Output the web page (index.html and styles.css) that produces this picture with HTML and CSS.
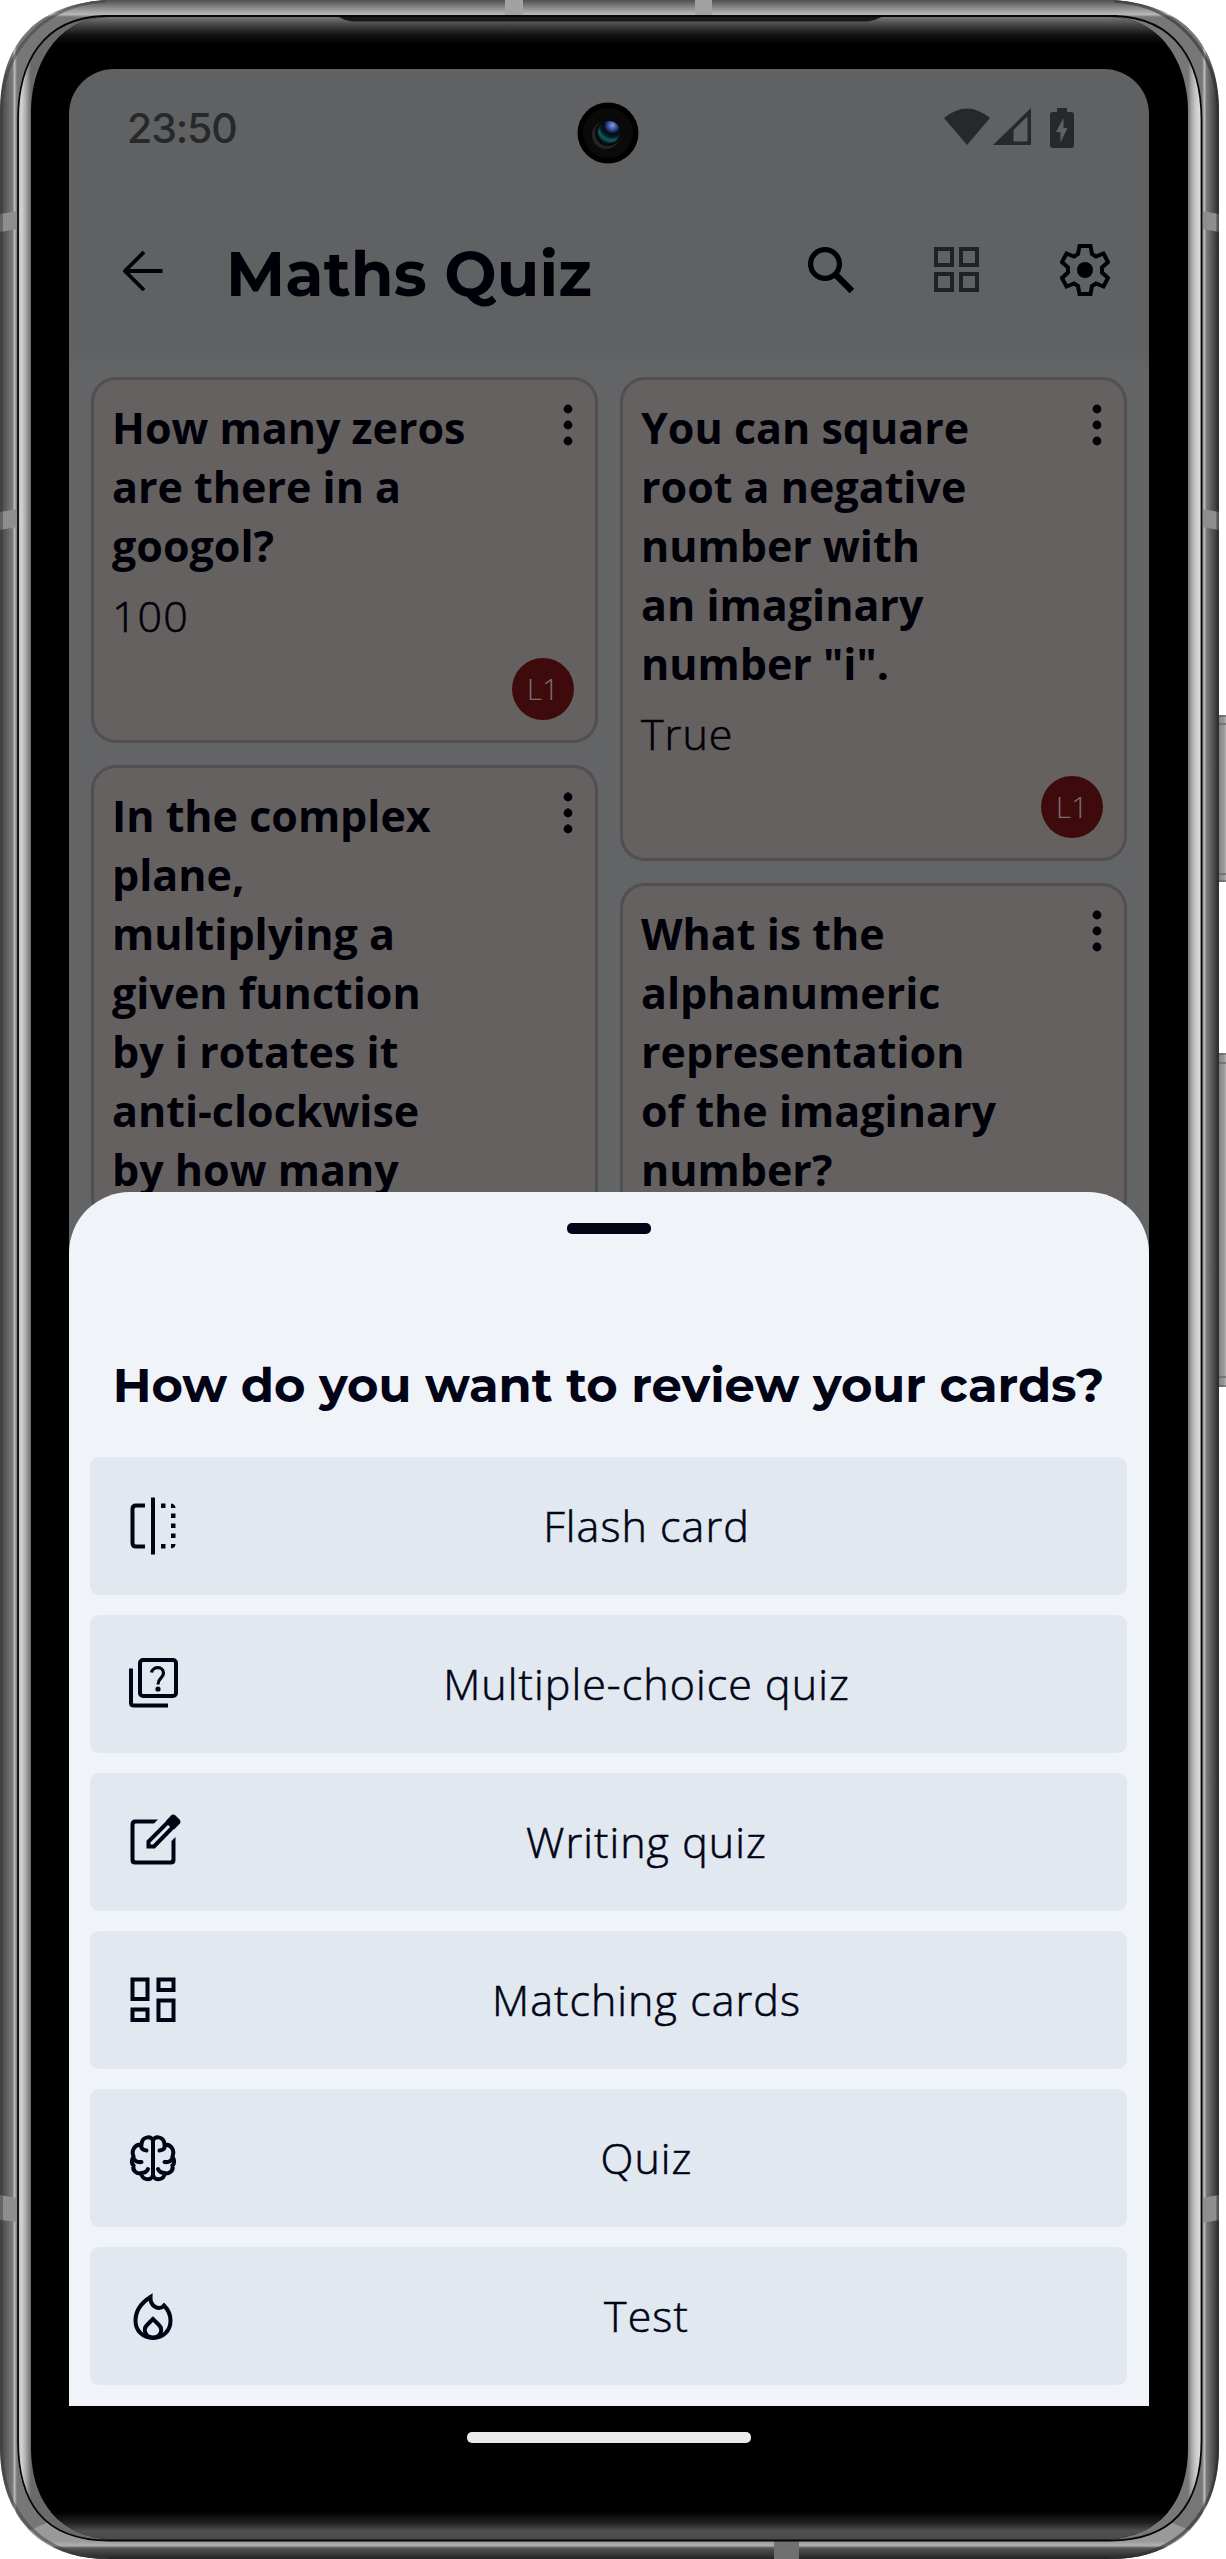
FILE: index.html
```html
<!DOCTYPE html>
<html lang="en">
<head>
<meta charset="utf-8">
<title>Maths Quiz</title>
<link rel="stylesheet" href="styles.css">
</head>
<body>
<div class="phone">
  <svg class="frame" width="1226" height="2559" viewBox="0 0 1226 2559" aria-hidden="true">
    <defs>
      <linearGradient id="metal-l" x1="0" x2="17" y1="0" y2="0" gradientUnits="userSpaceOnUse">
        <stop offset="0" stop-color="#424242"/><stop offset=".35" stop-color="#5c5c5c"/><stop offset=".75" stop-color="#7c7c7c"/><stop offset=".85" stop-color="#bcbcbc"/><stop offset="1" stop-color="#777"/>
      </linearGradient>
      <linearGradient id="metal-r" x1="1219" x2="1202" y1="0" y2="0" gradientUnits="userSpaceOnUse">
        <stop offset="0" stop-color="#2c2c2c"/><stop offset=".35" stop-color="#505050"/><stop offset=".75" stop-color="#7c7c7c"/><stop offset=".85" stop-color="#bcbcbc"/><stop offset="1" stop-color="#777"/>
      </linearGradient>
      <linearGradient id="metal-t" x1="0" x2="0" y1="0" y2="17" gradientUnits="userSpaceOnUse">
        <stop offset="0" stop-color="#505050"/><stop offset=".5" stop-color="#8e8e8e"/><stop offset=".85" stop-color="#b8b8b8"/><stop offset="1" stop-color="#777"/>
      </linearGradient>
      <linearGradient id="metal-b" x1="0" x2="0" y1="2541" y2="2559" gradientUnits="userSpaceOnUse">
        <stop offset="0" stop-color="#999"/><stop offset=".25" stop-color="#b0b0b0"/><stop offset=".4" stop-color="#555"/><stop offset="1" stop-color="#222"/>
      </linearGradient>
      <linearGradient id="strip-l" x1="17" x2="31" y1="0" y2="0" gradientUnits="userSpaceOnUse">
        <stop offset="0" stop-color="#aaa"/><stop offset=".3" stop-color="#d4d4d4"/><stop offset=".6" stop-color="#b0b0b0"/><stop offset="1" stop-color="#6a6a6a"/>
      </linearGradient>
      <linearGradient id="strip-r" x1="1201" x2="1188" y1="0" y2="0" gradientUnits="userSpaceOnUse">
        <stop offset="0" stop-color="#e0e0e0"/><stop offset=".4" stop-color="#cacaca"/><stop offset=".7" stop-color="#aaa"/><stop offset="1" stop-color="#777"/>
      </linearGradient>
      <linearGradient id="glow-t" x1="0" x2="0" y1="17" y2="44" gradientUnits="userSpaceOnUse">
        <stop offset="0" stop-color="#777"/><stop offset=".3" stop-color="#444"/><stop offset=".65" stop-color="#141414"/><stop offset="1" stop-color="#000"/>
      </linearGradient>
      <linearGradient id="glow-b" x1="0" x2="0" y1="2539" y2="2512" gradientUnits="userSpaceOnUse">
        <stop offset="0" stop-color="#4a4a4a"/><stop offset=".3" stop-color="#505050"/><stop offset=".6" stop-color="#202020"/><stop offset="1" stop-color="#000"/>
      </linearGradient>
      <linearGradient id="key" x1="1217" x2="1226" y1="0" y2="0" gradientUnits="userSpaceOnUse">
        <stop offset="0" stop-color="#444"/><stop offset=".3" stop-color="#8a8a8a"/><stop offset=".75" stop-color="#989898"/><stop offset="1" stop-color="#b4b4b4"/>
      </linearGradient>
      <clipPath id="body"><path d="M105 0H1114C1190 6 1219 50 1219 112V2447C1219 2510 1186 2559 1110 2559H109C33 2559 0 2510 0 2447V112C0 50 29 6 105 0Z"/></clipPath>
      <clipPath id="glass"><path d="M110 17H1109C1160 17 1188 62 1188 112V2447C1188 2500 1162 2539 1100 2540H119C57 2539 31 2500 31 2447V112C31 62 59 17 110 17Z"/></clipPath>
      <radialGradient id="lens" cx=".65" cy=".2" r=".9">
        <stop offset="0" stop-color="#8c98e8"/><stop offset=".22" stop-color="#34559c"/><stop offset=".42" stop-color="#050b16"/><stop offset=".58" stop-color="#04181c"/><stop offset=".75" stop-color="#0d5e60"/><stop offset="1" stop-color="#041414"/>
      </radialGradient>
    </defs>
    <g>
      <rect x="1217" y="715" width="12" height="167" fill="url(#key)"/><path d="M1218 716h8M1218 724h8M1218 874h8M1218 881h8" stroke="#555"/>
      <rect x="1217" y="1053" width="12" height="334" fill="url(#key)"/><path d="M1218 1054h8M1218 1063h8M1218 1377h8M1218 1386h8" stroke="#555"/>
    </g>
    <g clip-path="url(#body)">
      <rect width="610" height="2559" fill="url(#metal-l)"/>
      <rect x="609" width="610" height="2559" fill="url(#metal-r)"/>
      <path d="M28 28L60 0H1159L1191 28L1120 60H100Z" fill="url(#metal-t)"/>
      <path d="M28 2531L60 2559H1159L1191 2531L1120 2500H100Z" fill="url(#metal-b)"/>
      <g fill="#8e8e8e">
        <path fill="#a2a2a2" d="M505 0h18v21h-18zM695 0h17v21h-17z"/><path fill="#707070" d="M774 2541h25v18h-25z"/>
        <path d="M0 214l17-3v18l-17 3zM0 512l17-3v18l-17 3zM0 2195l17 3v24l-17-2z"/>
        <path d="M1219 214l-17-3v18l17 3zM1219 512l-17-3v18l17 3zM1219 2195l-17 3v25l17-3z"/>
      </g>
      <path d="M105 1C42 5 1.500 52 1.500 112V2447C1.500 2512 40 2557 109 2558" fill="none" stroke="#3c3c3c" stroke-opacity=".5" stroke-width="3"/>
      <path d="M1114 1C1177 5 1218 52 1218 112V2447C1218 2512 1179 2557 1110 2558" fill="none" stroke="#303030" stroke-opacity=".6" stroke-width="3"/>
    </g>
    <path d="M104 16H1115C1176 18 1202 62 1202 120V2440C1202 2502 1176 2541 1110 2541H109C43 2541 17 2502 17 2440V120C17 62 43 18 104 16Z" fill="url(#strip-l)"/>
    <path d="M1109 16H1115C1176 18 1202 62 1202 120V2440C1202 2502 1176 2541 1110 2541H1100Z" fill="url(#strip-r)"/>
    <g clip-path="url(#glass)">
      <rect x="31" y="17" width="1157" height="2523" fill="#000"/>
      <rect x="31" y="17" width="1157" height="27" fill="url(#glow-t)"/>
      <rect x="31" y="2512" width="1157" height="28" fill="url(#glow-b)"/>
      <path d="M330 16C342 16 342 21 354 21.500H866C878 21 878 16 890 16Z" fill="#181818"/>
    </g>
    <path d="M104 16H1115C1176 18 1201.500 62 1201.500 120V2440C1201.500 2502 1176 2540.500 1110 2540.500H109C43 2540.500 18 2502 18 2440V120C18 62 43 18 104 16Z" fill="none" stroke="#060606" stroke-width="1.800"/>
  </svg>

  <main class="screen">
    <div class="status">
      <span class="clock">23:50</span>
      <div class="signals">
        <svg width="46" height="38" viewBox="0 0 46 38"><path d="M0 10Q23-9 46 10L23 37Z"/></svg>
        <svg class="cell" width="38" height="38" viewBox="0 0 38 38"><path fill-rule="evenodd" d="M38 0V37H0ZM20.500 22V33.500H34.500V8.500Z"/></svg>
        <svg width="24" height="40" viewBox="0 0 24 40"><path fill-rule="evenodd" d="M7 0H17V4H21Q24 4 24 7V37Q24 40 21 40H3Q0 40 0 37V7Q0 4 3 4H7ZM13.500 10L6 24H10.500V34.500L17.500 20H13.500Z"/></svg>
      </div>
    </div>
    <svg class="camera" width="62" height="62" viewBox="0 0 62 62"><circle cx="31" cy="31" r="30.500" fill="#000"/><circle cx="31" cy="31" r="25" fill="#0a0a0a"/><circle cx="29" cy="33" r="14" fill="#242424"/><circle cx="31" cy="31" r="13" fill="#0a0a0c"/><circle cx="32" cy="30" r="11" fill="url(#lens)"/></svg>

    <header class="bar">
      <svg class="back" width="40" height="40" viewBox="0 0 40 40"><path d="M21 1L2 20L21 39M2 20H39.500" fill="none" stroke="#000008" stroke-width="3.800"/></svg>
      <h1>Maths Quiz</h1>
      <div class="tools">
        <svg width="46" height="46" viewBox="0 0 46 46"><circle cx="17" cy="17" r="14.400" fill="none" stroke="#000008" stroke-width="5.200"/><path d="M28 28L44 44" stroke="#000008" stroke-width="6.500"/></svg>
        <svg width="46" height="46" viewBox="0 0 46 46"><path d="M2 2H18V18H2ZM27 2H43V18H27ZM2 27H18V43H2ZM27 27H43V43H27Z" fill="none" stroke="#202123" stroke-width="4"/></svg>
        <svg width="50" height="52" viewBox="0 0 50 52"><path d="M19.500 2H30.500L32 10L36 12.500L43.500 9.500L48 18L42 23.500V28.500L48 34L43.500 42.500L36 39.500L32 42L30.500 50H19.500L18 42L14 39.500L6.500 42.500L2 34L8 28.500V23.500L2 18L6.500 9.500L14 12.500L18 10Z" fill="none" stroke="#000008" stroke-width="4"/><circle cx="25" cy="26" r="8" fill="#000008"/></svg>
      </div>
    </header>

    <section class="cards">
      <div class="column">
        <article class="card">
          <h2>How many zeros<br>are there in a<br>googol?</h2>
          <p>100</p>
          <span class="badge">L1</span>
          <svg class="more" width="10" height="42" viewBox="0 0 10 42"><circle cx="5" cy="5" r="4.400"/><circle cx="5" cy="21" r="4.400"/><circle cx="5" cy="37" r="4.400"/></svg>
        </article>
        <article class="card">
          <h2>In the complex<br>plane,<br>multiplying a<br>given function<br>by i rotates it<br>anti-clockwise<br>by how many</h2>
          <svg class="more" width="10" height="42" viewBox="0 0 10 42"><circle cx="5" cy="5" r="4.400"/><circle cx="5" cy="21" r="4.400"/><circle cx="5" cy="37" r="4.400"/></svg>
        </article>
      </div>
      <div class="column">
        <article class="card">
          <h2>You can square<br>root a negative<br>number with<br>an imaginary<br>number "i".</h2>
          <p>True</p>
          <span class="badge">L1</span>
          <svg class="more" width="10" height="42" viewBox="0 0 10 42"><circle cx="5" cy="5" r="4.400"/><circle cx="5" cy="21" r="4.400"/><circle cx="5" cy="37" r="4.400"/></svg>
        </article>
        <article class="card">
          <h2>What is the<br>alphanumeric<br>representation<br>of the imaginary<br>number?</h2>
          <svg class="more" width="10" height="42" viewBox="0 0 10 42"><circle cx="5" cy="5" r="4.400"/><circle cx="5" cy="21" r="4.400"/><circle cx="5" cy="37" r="4.400"/></svg>
        </article>
      </div>
    </section>

    <section class="sheet">
      <div class="handle"></div>
      <h2 class="ask">How do you want to review your cards?</h2>
      <div class="options">
        <button class="option">
          <svg width="60" height="60" viewBox="0 0 60 60"><path d="M22 9.500H13Q9.500 9.500 9.500 13V47Q9.500 50.500 13 50.500H22" fill="none" stroke-width="4"/><path d="M30 1.500V58.500" stroke-width="4"/><path class="solid" d="M38 7.500h4.500v4.500H38zM38 48h4.500v4.500H38zM48 17.500h4.500v4.500H48zM48 27.500h4.500v4.500H48zM48 37.500h4.500v4.500H48zM48 7.500Q52.500 8 52.500 12H48zM48 52.500Q52.500 52 52.500 48H48z"/></svg>
          <span>Flash card</span>
        </button>
        <button class="option">
          <svg width="60" height="60" viewBox="0 0 60 60"><rect x="17" y="6" width="36" height="36" rx="3" fill="none" stroke-width="4"/><path d="M8 14.500V49Q8 51.500 11 51.500H45" fill="none" stroke-width="4"/><path d="M28.500 18.500C30 11.500 40.500 12.500 40.500 19C40.500 24 35 24 35 30.500" fill="none" stroke-width="3.200"/><circle class="solid" cx="35" cy="35" r="2.600"/></svg>
          <span>Multiple-choice quiz</span>
        </button>
        <button class="option">
          <svg width="60" height="60" viewBox="0 0 60 60"><path class="solid" d="M7.500 13Q7.500 7.500 12 7.500H35L31 11.500H12.500L11.500 12.500V47.500L12.500 48.500H47.500L48.500 47.500V29L52.500 25V48Q52.500 52.500 48 52.500H12Q7.500 52.500 7.500 48Z"/><path d="M25.500 29.500V34.500H31L50 15L45 10Z" fill="none" stroke-width="4"/><path class="solid" d="M43 9L48 3.500Q50 1.500 52.500 3.500L56.500 7.500Q58.500 10 56.500 12L51 17.500Z"/></svg>
          <span>Writing quiz</span>
        </button>
        <button class="option">
          <svg width="60" height="60" viewBox="0 0 60 60"><path d="M9.500 9.500H24.500V29H9.500ZM35.500 9.500H50.500V20H35.500ZM9.500 39.500H24.500V50H9.500ZM35.500 30.500H50.500V50H35.500Z" fill="none" stroke-width="4"/></svg>
          <span>Matching cards</span>
        </button>
        <button class="option">
          <svg width="60" height="60" viewBox="0 0 60 60"><path d="M30 13.500C30 7.500 19 7.500 18.500 16.500C12 16 8 22 10.500 28.500C8 33 9 36 10.500 37.500C9 43 14 46 18.500 45.500C18 52 29 53.500 30 47M18 18C18.500 21 20.500 22.300 23.500 22.500M10.500 30C12 33.500 15 34.500 18.500 34M18 45C21 45 24 43.500 25 41M30 13.500C30 7.500 41 7.500 41.500 16.500C48 16 52 22 49.500 28.500C52 33 51 36 49.500 37.500C51 43 46 46 41.500 45.500C42 52 31 53.500 30 47M42 18C41.500 21 39.500 22.300 36.500 22.500M49.500 30C48 33.500 45 34.500 41.500 34M42 45C39 45 36 43.500 35 41M30 12V48" fill="none" stroke-width="4" stroke-linecap="round"/></svg>
          <span>Quiz</span>
        </button>
        <button class="option">
          <svg width="60" height="60" viewBox="0 0 60 60"><path d="M27.500 11C15 19 12.500 28 12.500 34.500C12.500 45 20 52 30 52C40 52 47.500 45 47.500 34.500C47.500 28 44.500 23 41 19.500C36.500 25 27 21 27.500 11Z" fill="none" stroke-width="4"/><path d="M30 33L24.500 38.500C18.500 44.500 23.500 51.500 30 51.500C36.500 51.500 41.500 44.500 35.500 38.500Z" fill="none" stroke-width="4"/></svg>
          <span>Test</span>
        </button>
      </div>
    </section>
  </main>
  <div class="home"></div>
</div>
</body>
</html>
```
FILE: styles.css
```css
* { box-sizing: border-box; }
body { margin: 0; background: #fff; font-family: "Open Sans", "Noto Sans", sans-serif; }
h1, h2, p { margin: 0; }
svg { display: block; flex: none; }

.phone {
  position: relative;
  width: 1226px;
  height: 2559px;
  padding: 69px 77px 0 69px;
  overflow: hidden;
}
.frame { position: absolute; left: 0; top: 0; }
.screen {
  position: relative;
  height: 2337px;
  overflow: hidden;
  border-radius: 45px 45px 0 0;
  background: linear-gradient(#606163 0, #606163 280px, #626466 300px);
}

.status {
  display: flex;
  justify-content: space-between;
  height: 120px;
  padding: 39px 75px 0 58px;
  color: #27282a;
}
.clock { font: 500 41px/41px "Inter", sans-serif; letter-spacing: -1.1px; }
.signals { display: flex; fill: #27282a; }
.cell { margin: 0 19px 0 3px; }
.camera { position: absolute; left: 508px; top: 33px; }

.bar { display: flex; align-items: center; height: 166px; padding: 0 39px 0 54px; }
.back { margin-bottom: 3px; }
h1 {
  flex: 1;
  margin: 3px 0 0 63px;
  color: #000008;
  font: 700 62px/74px "Montserrat", "Inter", sans-serif;
  letter-spacing: .1px;
}
.tools { display: flex; align-items: center; gap: 80px; margin-bottom: 5px; }

.cards { display: grid; grid-template-columns: 1fr 1fr; gap: 22px; padding: 22px 22px 0; }
.column { display: flex; flex-direction: column; gap: 22px; }
.card {
  position: relative;
  display: flex;
  flex-direction: column;
  padding: 18px 21px 20px 18px;
  border: 3px solid #524f53;
  border-radius: 25px;
  background: #656160;
  color: #000008;
}
.card h2 { font-size: 43px; font-weight: 700; line-height: 59px; white-space: nowrap; }
.card p {
  margin-top: 11px;
  font-size: 43px;
  font-weight: 300;
  line-height: 59px;
  letter-spacing: 1.05px;
  -webkit-text-stroke: .6px currentColor;
}
.badge {
  align-self: flex-end;
  width: 62px;
  height: 62px;
  margin-top: 13px;
  border-radius: 50%;
  background: #3e0a0b;
  color: #77706f;
  font-size: 30px;
  font-weight: 300;
  line-height: 62px;
  text-align: center;
}
.more { position: absolute; right: 22px; top: 24px; fill: #000008; }

.sheet {
  position: absolute;
  inset: auto 0 0;
  height: 1214px;
  padding: 31px 22px 0 21px;
  border-radius: 61px 61px 0 0;
  background: #f0f4f9;
}
.handle { width: 84px; height: 11px; margin: 0 auto; border-radius: 5px; background: #020416; }
.ask {
  margin-top: 121px;
  color: #020416;
  font: 700 48px/60px "Montserrat", "Inter", sans-serif;
  text-align: center;
  white-space: nowrap;
}
.options { display: flex; flex-direction: column; gap: 20px; margin-top: 42px; }
.option {
  display: flex;
  align-items: center;
  height: 138px;
  padding: 0 17px 0 33px;
  border: 0;
  border-radius: 9px;
  background: #e1e8f0;
  color: #020416;
  font: 300 43px/59px "Open Sans", sans-serif;
  letter-spacing: 1.05px;
}
.option svg { stroke: #020416; }
.option .solid { fill: #020416; stroke: none; }
.option span {
  flex: 1;
  margin-bottom: 2px;
  text-align: center;
  -webkit-text-stroke: .6px currentColor;
}
.home {
  position: absolute;
  left: 467px;
  top: 2432px;
  width: 284px;
  height: 11px;
  border-radius: 5px;
  background: #ebebeb;
}
```
